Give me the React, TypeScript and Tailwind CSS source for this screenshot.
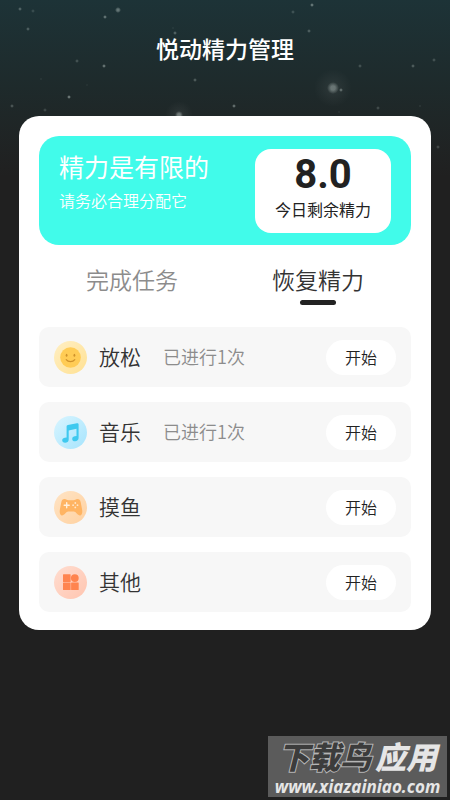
import { useState } from "react";
import type { ReactNode } from "react";

type Task = { name: string; note?: string; icon: ReactNode };

// x, y, radius, opacity
const stars = [
  [20, 9, 2, 0.3],
  [33, 11, 2, 0.16],
  [28, 29, 2, 0.28],
  [105, 17, 2, 0.4],
  [118, 10, 3, 0.42],
  [77, 61, 2, 0.22],
  [104, 66, 2, 0.42],
  [41, 79, 1, 0.16],
  [87, 85, 1, 0.12],
  [69, 97, 2, 0.45],
  [12, 106, 2, 0.26],
  [45, 110, 2, 0.18],
  [173, 28, 1, 0.15],
  [175, 33, 2, 0.3],
  [195, 80, 2, 0.28],
  [179, 115, 4, 0.42],
  [312, 5, 2, 0.42],
  [293, 12, 2, 0.2],
  [309, 31, 2, 0.28],
  [360, 66, 2, 0.22],
  [413, 66, 2, 0.28],
  [434, 60, 2, 0.22],
  [341, 90, 2, 0.35],
  [234, 106, 2, 0.4],
  [378, 108, 2, 0.2],
  [339, 112, 1, 0.14],
  [420, 106, 1, 0.2],
  [438, 147, 2, 0.2],
];

const Stars = (): JSX.Element => (
  <svg
    className="absolute top-0 left-0 w-full h-44"
    viewBox="0 0 450 176"
    preserveAspectRatio="xMidYMin slice"
    aria-hidden="true"
  >
    <defs>
      <radialGradient id="star">
        <stop offset="0.35" stopColor="#c3d0cc" />
        <stop offset="1" stopColor="#c3d0cc" stopOpacity="0" />
      </radialGradient>
      <radialGradient id="glow">
        <stop offset="0" stopColor="#fff" stopOpacity="0.07" />
        <stop offset="1" stopColor="#fff" stopOpacity="0" />
      </radialGradient>
    </defs>
    {stars.map(([x, y, r, opacity]) => (
      <circle key={`${x}-${y}`} cx={x} cy={y} r={r} fill="url(#star)" opacity={opacity} />
    ))}
    <circle cx="333" cy="88" r="19" fill="url(#glow)" />
    <circle cx="333" cy="88" r="6" fill="url(#star)" opacity="0.4" />
    <circle cx="179" cy="115" r="14" fill="url(#glow)" />
  </svg>
);

const SmileIcon = (): JSX.Element => (
  <svg className="size-[33px] shrink-0" viewBox="0 0 33 33" aria-hidden="true">
    <defs>
      <linearGradient id="smileBg" x1="0" y1="0" x2="1" y2="1">
        <stop stopColor="#ffefc4" />
        <stop offset="1" stopColor="#ffe193" />
      </linearGradient>
    </defs>
    <circle cx="16.5" cy="16.5" r="16.5" fill="url(#smileBg)" />
    <circle cx="16.5" cy="16.5" r="10.3" fill="#ffcc55" />
    <ellipse cx="12.6" cy="14.2" rx="0.9" ry="1.5" fill="#cf922c" />
    <ellipse cx="20.4" cy="14.2" rx="0.9" ry="1.5" fill="#cf922c" />
    <path d="M12.2 18.6c2.1 2.7 6.5 2.7 8.6 0" fill="none" stroke="#cf922c" strokeWidth="1.2" strokeLinecap="round" />
  </svg>
);

const MusicIcon = (): JSX.Element => (
  <svg className="size-[33px] shrink-0" viewBox="0 0 33 33" aria-hidden="true">
    <defs>
      <linearGradient id="musicBg" x1="0" y1="0" x2="1" y2="1">
        <stop stopColor="#d9f5ff" />
        <stop offset="1" stopColor="#a6e4fd" />
      </linearGradient>
    </defs>
    <circle cx="16.5" cy="16.5" r="16.5" fill="url(#musicBg)" />
    <path
      d="M12.6 10.6c0-.8.5-1.3 1.3-1.5l9-1.9c1-.2 1.7.3 1.7 1.3v13.6c0 2-1.5 3.2-3.5 3.2-1.8 0-2.9-1-2.9-2.4 0-1.8 1.7-2.8 4.3-2.8v-7.4l-7.8 1.7v9c0 2.1-1.6 3.3-3.6 3.3-1.8 0-2.9-1-2.9-2.4 0-1.8 1.7-2.8 4.4-2.8z"
      fill="#3fc9ef"
    />
  </svg>
);

const GamepadIcon = (): JSX.Element => (
  <svg className="size-[33px] shrink-0" viewBox="0 0 33 33" aria-hidden="true">
    <defs>
      <linearGradient id="padBg" x1="0" y1="0" x2="1" y2="1">
        <stop stopColor="#ffe4c5" />
        <stop offset="1" stopColor="#ffd1a0" />
      </linearGradient>
    </defs>
    <circle cx="16.5" cy="16.5" r="16.5" fill="url(#padBg)" />
    <path
      d="M10.5 8c2 0 2.5 1.3 4 1.3h5c1.5 0 2-1.3 4-1.3 1.8 0 2.7 1.2 3.2 3.2l1.4 7.3c.6 3.3-.2 6-2.1 6-2.5 0-4-3.9-6.3-3.9h-5.4c-2.3 0-3.8 3.9-6.3 3.9-1.9 0-2.7-2.7-2.1-6l1.4-7.3c.5-2 1.4-3.2 3.2-3.2z"
      fill="#ffb462"
    />
    <path d="M12.7 11.7v5M10.2 14.2h5" stroke="#fff0dd" strokeWidth="1.4" strokeLinecap="round" />
    <g fill="#ffe6c8">
      <circle cx="21.3" cy="12" r="0.9" />
      <circle cx="21.3" cy="16.4" r="0.9" />
      <circle cx="19.1" cy="14.2" r="0.9" />
      <circle cx="23.5" cy="14.2" r="0.9" />
    </g>
  </svg>
);

const GridIcon = (): JSX.Element => (
  <svg className="size-[33px] shrink-0" viewBox="0 0 33 33" aria-hidden="true">
    <defs>
      <linearGradient id="gridBg" x1="0" y1="0" x2="1" y2="1">
        <stop stopColor="#ffddd0" />
        <stop offset="1" stopColor="#ffc5b0" />
      </linearGradient>
    </defs>
    <circle cx="16.5" cy="16.5" r="16.5" fill="url(#gridBg)" />
    <g fill="#ff844f">
      <rect x="9" y="8.3" width="7.6" height="7.6" rx="0.5" />
      <circle cx="20.8" cy="12.1" r="3.9" />
      <rect x="9" y="16.4" width="7.6" height="7.6" rx="0.5" />
      <rect x="17.1" y="16.4" width="7.6" height="7.6" rx="0.5" />
    </g>
  </svg>
);

const tasks: Task[] = [
  { name: "放松", note: "已进行1次", icon: <SmileIcon /> },
  { name: "音乐", note: "已进行1次", icon: <MusicIcon /> },
  { name: "摸鱼", icon: <GamepadIcon /> },
  { name: "其他", icon: <GridIcon /> },
];

const tabs = ["完成任务", "恢复精力"];

const TaskRow = ({ name, note, icon }: Task): JSX.Element => (
  <li className="flex items-center h-[60px] px-[15px] rounded-[10px] bg-[#f7f7f7]">
    {icon}
    <span className="ml-3 pb-[3px] text-[21px] leading-7 font-[350] text-[#333]">{name}</span>
    {note && <span className="ml-[22px] pb-[2px] text-[18px] leading-6 font-[350] text-[#8c8c8c]">{note}</span>}
    <button
      type="button"
      aria-label={`开始 ${name}`}
      className="ml-auto w-[70px] h-[35px] pb-px rounded-full bg-white text-[16px] leading-6 font-[350] text-[#222]"
    >
      开始
    </button>
  </li>
);

const App = (): JSX.Element => {
  const [active, setActive] = useState(1);

  return (
    <div className="relative min-h-screen bg-[#202020] font-['Noto_Sans_CJK_SC',sans-serif]">
      <div className="absolute inset-x-0 top-0 h-44 bg-linear-to-b from-[#1d3337] via-[#1e2a2b] to-[#202020]" />
      <Stars />
      <main className="relative px-[19px] pt-8">
        <h1 className="text-center text-[23px] leading-8 font-medium text-white">悦动精力管理</h1>
        <div className="mt-[52px] p-5 pb-[18px] rounded-[20px] bg-white">
          <section className="flex justify-between h-[109px] px-5 pt-[13px] rounded-[20px] bg-[#41fbea]">
            <div>
              <h2 className="text-[25px] leading-[34px] text-white">精力是有限的</h2>
              <p className="mt-[5px] text-[16px] leading-6 font-[350] text-white">请务必合理分配它</p>
            </div>
            <div className="w-[136px] h-[84px] rounded-[16px] bg-white text-center text-[#222]">
              <div className="pt-[6px] font-[Roboto,sans-serif] text-[40px] leading-10 font-bold">8.0</div>
              <div className="mt-[2px] text-[16px] leading-6">今日剩余精力</div>
            </div>
          </section>
          <div role="tablist" className="grid grid-cols-2 mt-[18px]">
            {tabs.map((tab, i) => (
              <button
                key={tab}
                type="button"
                role="tab"
                aria-selected={i === active}
                onClick={() => setActive(i)}
                className={`flex flex-col items-center gap-[5px] text-[23px] leading-8 font-[350] ${
                  i === active ? "text-[#333]" : "text-[#8c8c8c]"
                }`}
              >
                {tab}
                <span className={`w-9 h-[5px] rounded-full ${i === active ? "bg-[#222]" : ""}`} />
              </button>
            ))}
          </div>
          <ul className="flex flex-col gap-[15px] mt-[22px]">
            {tasks.map((task) => (
              <TaskRow key={task.name} {...task} />
            ))}
          </ul>
        </div>
      </main>
      <aside className="absolute right-[3px] bottom-[3px] flex flex-col justify-between w-[179px] h-[61px] pt-1 bg-[#5b5b5b] text-center whitespace-nowrap italic">
        <div className="flex justify-center gap-1 text-[31px] leading-8 font-black text-[#e6e6e6]">
          <span className="text-[#3c3c3c] [-webkit-text-stroke:2px_#b5b5b5] [paint-order:stroke_fill]">下载鸟</span>
          <span>应用</span>
        </div>
        <div className="font-['Noto_Sans',sans-serif] text-[17px] leading-5 font-bold text-[#e6e6e6]">
          www.xiazainiao.com
        </div>
      </aside>
    </div>
  );
};

export default App;
